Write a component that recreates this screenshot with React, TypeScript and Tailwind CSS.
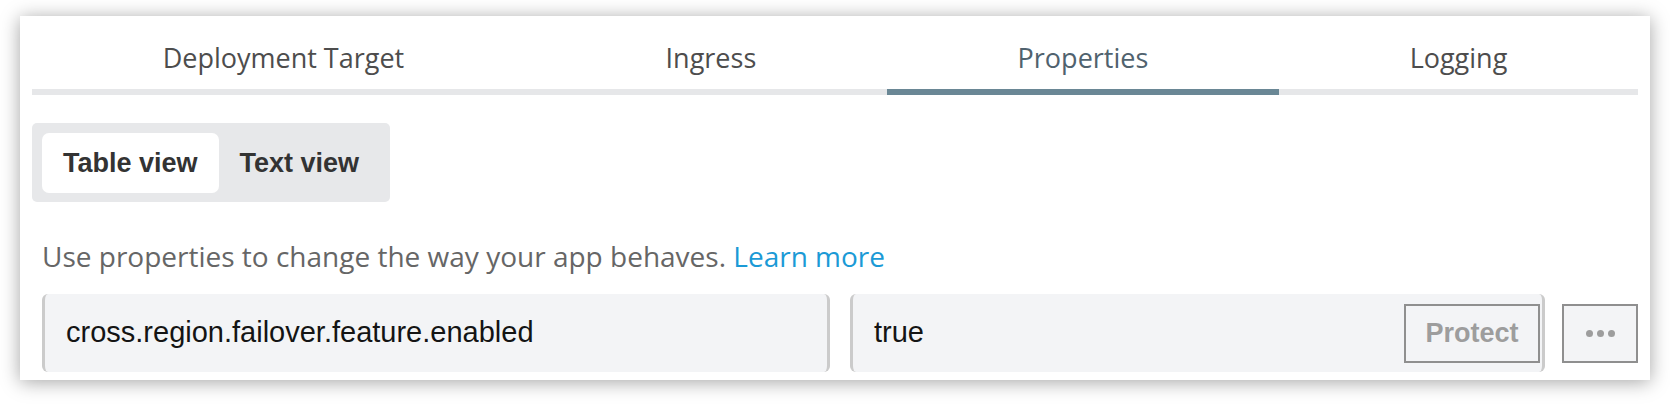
import { useState } from "react";

const TABS = ["Deployment Target", "Ingress", "Properties", "Logging"];

// Key/value row of the properties table, with protect toggle and overflow menu.
function PropertyRow({ name, value }: { name: string; value: string }) {
  return (
    <div className="mt-[20px] flex items-center pl-[10px]">
      <div className="flex h-[78px] w-[788px] items-center rounded-[6px] border-x-[3px] border-[#cbcbcb] bg-[#f3f4f6] pl-[21px] font-['Liberation_Sans',Arial,sans-serif] text-[29px] text-[#141414]">
        {name}
      </div>
      <div className="ml-[20px] flex h-[78px] flex-1 items-center rounded-[6px] border-x-[3px] border-[#cbcbcb] bg-[#f3f4f6] pl-[21px] pr-[2px]">
        <span className="flex-1 font-['Liberation_Sans',Arial,sans-serif] text-[29px] text-[#141414]">{value}</span>
        <button
          type="button"
          className="h-[59px] w-[136px] border-2 border-[#8f8f8f] font-['Liberation_Sans',Arial,sans-serif] text-[27px] font-bold text-[#9d9d9d]"
        >
          Protect
        </button>
      </div>
      <button
        type="button"
        className="ml-[17px] flex h-[59px] w-[76px] items-center justify-center gap-[4px] border-2 border-[#8f8f8f] bg-[#f3f4f6]"
      >
        <span className="h-[7px] w-[7px] rounded-full bg-[#9d9d9d]" />
        <span className="h-[7px] w-[7px] rounded-full bg-[#9d9d9d]" />
        <span className="h-[7px] w-[7px] rounded-full bg-[#9d9d9d]" />
      </button>
    </div>
  );
}

export default function App() {
  const [tab, setTab] = useState("Properties");
  const [view, setView] = useState("table");

  return (
    <div className="h-[404px] bg-white pl-[20px] pt-[16px]">
      <div className="h-[364px] w-[1630px] bg-white px-[12px] shadow-[0_2px_18px_rgba(0,0,0,0.36)]">
        <div className="flex">
          {TABS.map((t) => (
            <button
              key={t}
              type="button"
              onClick={() => setTab(t)}
              className={`flex-auto border-b-[6px] pb-[13px] pt-[24px] text-center font-['Open_Sans',sans-serif] text-[27px] leading-[36px] ${
                t === tab ? "border-[#6a8795] text-[#50626e]" : "border-[#e6e7e9] text-[#4d4d4d]"
              }`}
            >
              {t}
            </button>
          ))}
        </div>

        <div className="mt-[28px] flex w-fit rounded-[5px] bg-[#e7e8ea] px-[10px] pb-[9px] pt-[10px]">
          <button
            type="button"
            onClick={() => setView("table")}
            className={`h-[60px] rounded-[7px] px-[21px] font-['Liberation_Sans',Arial,sans-serif] text-[27px] font-bold text-[#333] ${
              view === "table" ? "bg-white" : ""
            }`}
          >
            Table view
          </button>
          <button
            type="button"
            onClick={() => setView("text")}
            className={`h-[60px] rounded-[7px] px-[21px] font-['Liberation_Sans',Arial,sans-serif] text-[27px] font-bold text-[#333] ${
              view === "text" ? "bg-white" : ""
            }`}
          >
            Text view
          </button>
        </div>

        <p className="mt-[36px] pl-[10px] font-['Open_Sans',sans-serif] text-[28px] leading-[36px] text-[#666]">
          Use properties to change the way your app behaves.{" "}
          <a href="#" className="text-[#1b9ad6]">
            Learn more
          </a>
        </p>

        <PropertyRow name="cross.region.failover.feature.enabled" value="true" />
      </div>
    </div>
  );
}
